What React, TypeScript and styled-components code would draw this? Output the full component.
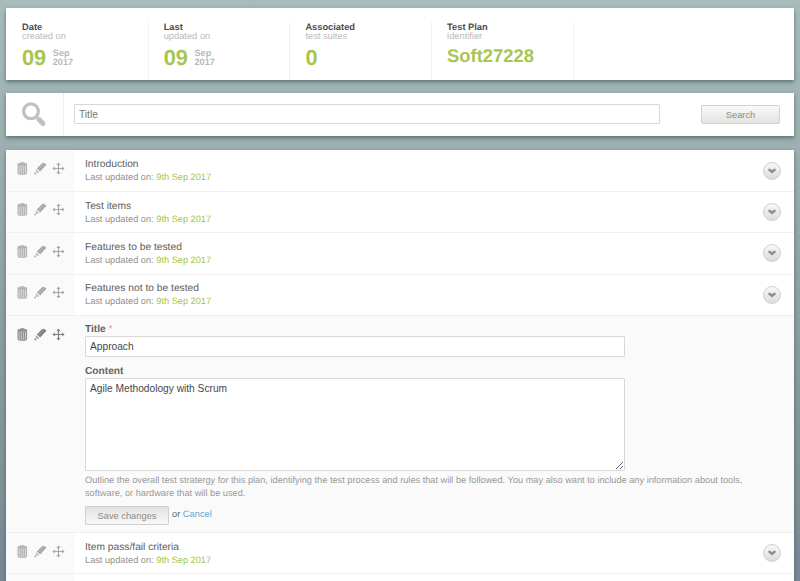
import React from "react";
import styled, { createGlobalStyle } from "styled-components";

const GlobalStyle = createGlobalStyle`
  *, *::before, *::after { box-sizing: border-box; }
  html, body { margin: 0; height: 100%; overflow: hidden; }
  body {
    font-family: "Liberation Sans", Arial, sans-serif;
    text-rendering: geometricPrecision;
    color: #666;
    background: linear-gradient(#a8bcbb 0, #9cb0b2 150px, #8b9da2 350px, #7a8894 581px);
  }
`;

const Page = styled.main`
  height: 581px;
  padding: 8px 6px 0;
  display: flex;
  flex-direction: column;
  overflow: hidden;
`;

const Panel = styled.section`
  flex: none;
  background: #fff;
  box-shadow: 0 2px 4px rgba(50, 70, 70, 0.6);
`;

const StatsPanel = styled(Panel)`
  display: flex;
  height: 72px;
  padding-top: 14px;
`;

const Stat = styled.div`
  width: 141.7px;
  padding-left: 16px;
  box-shadow: 1px 0 #f1f1f1;
`;

const StatName = styled.div`
  font-size: 9.3px;
  font-weight: bold;
  line-height: 10px;
  color: #4c4c4c;
`;

const StatHint = styled.div`
  font-size: 9.3px;
  line-height: 9px;
  color: #bbb;
`;

const StatValue = styled.div<{ $size: number; $top: number }>`
  display: flex;
  margin-top: ${(p) => p.$top}px;
  font-size: ${(p) => p.$size}px;
  font-weight: bold;
  line-height: 24px;
  color: #a8c64f;
`;

const MonthYear = styled.div`
  margin: 3px 0 0 6.5px;
  font-size: 9.2px;
  line-height: 8.8px;
  color: #b9b9b9;
`;

const SearchPanel = styled(Panel)`
  display: flex;
  align-items: center;
  height: 43px;
  margin-top: 13px;
  padding-right: 14px;
`;

const SearchIconCell = styled.div`
  width: 58px;
  height: 100%;
  padding: 8px 0 0 14px;
  border-right: 1px solid #eee;
`;

const TextInput = styled.input`
  display: block;
  width: 540px;
  height: 21px;
  padding: 0 4px;
  border: 1px solid #d8d8d8;
  border-radius: 1px;
  background: #fff;
  font: 10.2px "Liberation Sans", Arial, sans-serif;
  color: #484848;
  outline: none;
`;

const SearchInput = styled(TextInput)`
  width: 586px;
  height: 20px;
  margin: -1px auto 0 10px;
  color: #777;
`;

const Button = styled.button<{ $width: number; $flat?: boolean }>`
  width: ${(p) => p.$width}px;
  height: 19px;
  padding: 0;
  border: 1px solid #d0d0d0;
  border-radius: ${(p) => (p.$flat ? 1 : 2)}px;
  background: ${(p) =>
    p.$flat ? "linear-gradient(#e2e2e2, #f8f8f8)" : "linear-gradient(#fafafa, #e3e3e3)"};
  font: 9.3px "Liberation Sans", Arial, sans-serif;
  color: #8b8b8b;
`;

const List = styled(Panel)`
  margin-top: 14px;
  padding-top: 0.65px;
`;

const Row = styled.article<{ $editing?: boolean }>`
  display: flex;
  height: ${(p) => (p.$editing ? 217 : 41.35)}px;
  border-bottom: 1px solid #f0f0f0;
  background: ${(p) => (p.$editing ? "#fafafa" : "#fff")};
`;

const Actions = styled.div<{ $active?: boolean }>`
  display: flex;
  flex: none;
  gap: 5px;
  width: 69px;
  padding: 11.5px 0 0 10px;
  background: #fafafa;
  color: ${(p) => (p.$active ? "#808080" : "#a8a8a8")};
`;

const Summary = styled.div`
  flex: 1;
  padding: 7.6px 0 0 10px;
`;

const RowTitle = styled.div`
  font-size: 10.25px;
  line-height: 13px;
  color: #606060;
`;

const Updated = styled.div`
  font-size: 9.23px;
  line-height: 12px;
  color: #909090;
`;

const UpdatedDate = styled.span`
  color: #a2c644;
`;

const Toggle = styled.button`
  display: grid;
  place-items: center;
  width: 18px;
  height: 18px;
  margin: 11px 13.5px 0 0;
  padding: 0;
  border: 1px solid #d0d0d0;
  border-radius: 50%;
  background: linear-gradient(#f8f8f8, #dcdcdc);
`;

const Form = styled.div`
  flex: 1;
  padding: 8px 40px 0 10px;
`;

const Label = styled.label`
  display: block;
  font-size: 10.2px;
  font-weight: bold;
  line-height: 12.2px;
  color: #626262;
`;

const Required = styled.span`
  font-weight: normal;
  color: #e98a84;
`;

const ContentLabel = styled(Label)`
  margin-top: 8px;
  line-height: 13px;
`;

const ContentArea = styled.textarea`
  display: block;
  width: 540px;
  height: 93px;
  padding: 4px;
  border: 1px solid #d8d8d8;
  border-radius: 1px;
  background: #fff;
  font: 10.2px/12px "Liberation Sans", Arial, sans-serif;
  color: #484848;
  outline: none;
`;

const Help = styled.p`
  width: 670px;
  margin: 3px 0 0;
  font-size: 9.23px;
  line-height: 13px;
  color: #989898;
`;

const FormActions = styled.div`
  display: flex;
  align-items: center;
  gap: 3px;
  margin-top: 6px;
  font-size: 9.3px;
  line-height: 13px;
  color: #666;
`;

const OrCancel = styled.span`
  margin-bottom: 2px;
`;

const Cancel = styled.a`
  color: #69a3c8;
`;

const SearchIcon = () => (
  <svg width="28" height="28" viewBox="0 0 28 28" fill="none" stroke="#c0c0c0">
    <circle cx="11" cy="10.3" r="7.4" strokeWidth="3.2" />
    <path d="M16.3 15.7l2.6 2.6" strokeWidth="2" />
    <path d="M19.1 18.6l3.9 3.9" strokeWidth="5" strokeLinecap="round" />
  </svg>
);

const TrashIcon = () => (
  <svg width="13" height="13" viewBox="0 0 13 13" fill="none" stroke="currentColor">
    <path d="M4.4 1.5V.8h3.8v.7" strokeWidth="1" />
    <path d="M1.6 2.1h9.4" strokeWidth="1.5" />
    <path
      d="M2 3.2h8.6v7.8q0 1.2-1.2 1.2H3.2q-1.2 0-1.2-1.2z"
      fill="currentColor"
      fillOpacity=".4"
      strokeWidth=".9"
    />
    <path d="M4.2 4v7.4M6.3 4v7.4M8.4 4v7.4" strokeWidth=".9" />
  </svg>
);

const PencilIcon = () => (
  <svg width="13" height="13" viewBox="0 0 13 13" fill="currentColor">
    <path d="M8.1 1.2q.7-.6 1.6-.3l2 .9q.8.6.2 1.5L6.2 9.6 2.8 6.6z" />
    <path d="M2.2 7.3l3.1 2.9-2.2.8-1.5-1.3z" opacity=".7" />
    <circle cx="1.2" cy="11.4" r=".9" />
    <path d="M4.4 7.4l5.3-5.3" stroke="#fff" strokeWidth=".6" opacity=".4" />
  </svg>
);

const MoveIcon = () => (
  <svg width="13" height="13" viewBox="0 0 13 13" fill="currentColor">
    <path d="M6.5 2v9M2 6.5h9" stroke="currentColor" strokeWidth="1.2" />
    <path d="M6.5.4l2.1 2.5H4.4zM6.5 12.6l-2.1-2.5h4.2zM.4 6.5l2.5-2.1v4.2zM12.6 6.5l-2.5 2.1V4.4z" />
  </svg>
);

const ChevronIcon = () => (
  <svg width="8" height="6" viewBox="0 0 8 6" fill="#8f8f8f">
    <path d="M.3.8h2L4 2.2 5.7.8h2v1.7L4 5.6.3 2.5z" />
  </svg>
);

const RowActions = ({ active }: { active?: boolean }) => (
  <Actions $active={active}>
    <TrashIcon />
    <PencilIcon />
    <MoveIcon />
  </Actions>
);

const SectionRow = ({ title }: { title: string }) => (
  <Row>
    <RowActions />
    <Summary>
      <RowTitle>{title}</RowTitle>
      <Updated>
        Last updated on: <UpdatedDate>9th Sep 2017</UpdatedDate>
      </Updated>
    </Summary>
    <Toggle aria-label={`Expand ${title}`}>
      <ChevronIcon />
    </Toggle>
  </Row>
);

const DateStat = ({ name, hint }: { name: string; hint: string }) => (
  <Stat>
    <StatName>{name}</StatName>
    <StatHint>{hint}</StatHint>
    <StatValue $size={21.8} $top={5}>
      09
      <MonthYear>
        Sep
        <br />
        2017
      </MonthYear>
    </StatValue>
  </Stat>
);

const upperSections = ["Introduction", "Test items", "Features to be tested", "Features not to be tested"];

export default function App() {
  return (
    <>
      <GlobalStyle />
      <Page>
        <StatsPanel>
          <DateStat name="Date" hint="created on" />
          <DateStat name="Last" hint="updated on" />
          <Stat>
            <StatName>Associated</StatName>
            <StatHint>test suites</StatHint>
            <StatValue $size={21.8} $top={5}>0</StatValue>
          </Stat>
          <Stat>
            <StatName>Test Plan</StatName>
            <StatHint>identifier</StatHint>
            <StatValue $size={18.4} $top={3}>Soft27228</StatValue>
          </Stat>
        </StatsPanel>

        <SearchPanel>
          <SearchIconCell>
            <SearchIcon />
          </SearchIconCell>
          <SearchInput defaultValue="Title" />
          <Button $width={79}>Search</Button>
        </SearchPanel>

        <List>
          {upperSections.map((title) => (
            <SectionRow key={title} title={title} />
          ))}
          <Row $editing>
            <RowActions active />
            <Form>
              <Label>
                Title <Required>*</Required>
              </Label>
              <TextInput defaultValue="Approach" />
              <ContentLabel>Content</ContentLabel>
              <ContentArea defaultValue="Agile Methodology with Scrum" />
              <Help>
                Outline the overall test stratergy for this plan, identifying the test process and rules that will be
                followed. You may also want to include any information about tools, software, or hardware that will be
                used.
              </Help>
              <FormActions>
                <Button $width={84} $flat>
                  Save changes
                </Button>
                <OrCancel>
                  or <Cancel>Cancel</Cancel>
                </OrCancel>
              </FormActions>
            </Form>
          </Row>
          <SectionRow title="Item pass/fail criteria" />
          <Row>
            <Actions />
          </Row>
        </List>
      </Page>
    </>
  );
}
